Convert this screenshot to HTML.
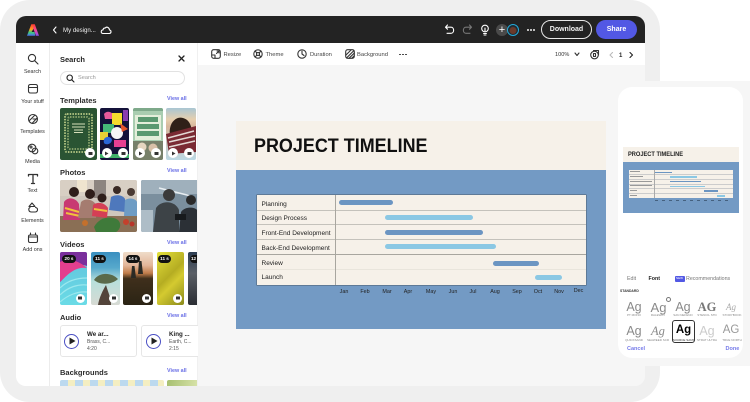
<!DOCTYPE html>
<html><head><meta charset="utf-8"><style>
html,body{margin:0;padding:0;background:#fff}
body{width:750px;height:402px;overflow:hidden;position:relative;font-family:"Liberation Sans",sans-serif;color:#2c2c2c}
.a{position:absolute}
.t{position:absolute;white-space:nowrap;line-height:1}
.h{position:absolute;font-weight:bold;font-size:7.5px;color:#2c2c2c;left:60px;white-space:nowrap;line-height:1;margin-top:1px}
.v{position:absolute;left:167px;font-size:5.4px;color:#6a6fe6;font-weight:bold;white-space:nowrap;line-height:1;margin-top:1px}
.rail{position:absolute;left:16px;width:33px;text-align:center;font-size:5.4px;color:#333;line-height:1;margin-top:1.5px}
.ic{position:absolute;fill:none;stroke:#333;stroke-width:1.1;stroke-linecap:round;stroke-linejoin:round}
.pl{position:absolute;width:10px;height:10px;border-radius:50%;background:#fff}
.pl svg{position:absolute;left:2.5px;top:2.5px}
.dur{position:absolute;height:8px;border-radius:4px;background:#111;color:#fff;font-size:4.6px;line-height:8px;text-align:center;font-weight:bold}
.img{position:absolute;overflow:hidden;border-radius:2px}
.row{position:absolute;left:0;width:329px;height:1px;background:#c4c2bb}
.lb{position:absolute;left:4.5px;font-size:6.5px;color:#222;line-height:1;white-space:nowrap;margin-top:1.5px}
.bar{position:absolute;height:5px;border-radius:3px}
.m{position:absolute;top:289.5px;width:20px;text-align:center;font-size:5.4px;color:#222;line-height:1}
.ag{position:absolute;width:24px;text-align:center;font-size:12.5px;color:#8a8a8a;line-height:1}
.al{position:absolute;width:26px;text-align:center;font-size:3px;color:#888;line-height:1;white-space:nowrap}
.tb{position:absolute;top:52.5px;font-size:5.8px;color:#444;white-space:nowrap;line-height:1}
</style></head><body>

<div class="a" style="left:0;top:0;width:660px;height:402px;background:#efefef;border-radius:30px"></div>
<div class="a" style="left:16px;top:16px;width:629px;height:370px;background:#f6f6f6;border-radius:10px;overflow:hidden">
  <div class="a" style="left:0;top:0;width:629px;height:27px;background:#232323"></div>
  <div class="a" style="left:0;top:27px;width:629px;height:22px;background:#fff"></div>
  <div class="a" style="left:0;top:27px;width:181px;height:343px;background:#fff"></div>
  <div class="a" style="left:33px;top:27px;width:1px;height:343px;background:#ececec"></div>
  <div class="a" style="left:181px;top:27px;width:1px;height:343px;background:#f0f0f0"></div>
</div>

<!-- top bar -->
<svg class="a" style="left:27px;top:24px" width="12" height="12" viewBox="0 0 12 12"><defs><linearGradient id="l1" x1="0" y1="0" x2="0" y2="1"><stop offset="0" stop-color="#ff3b30"/><stop offset=".45" stop-color="#ffa21e"/><stop offset=".7" stop-color="#3fcf7a"/><stop offset="1" stop-color="#4a6cf0"/></linearGradient><linearGradient id="l2" x1="0" y1="0" x2="0" y2="1"><stop offset="0" stop-color="#ff3b30"/><stop offset=".5" stop-color="#f0489a"/><stop offset="1" stop-color="#8a50f0"/></linearGradient></defs><path d="M4.3 .3H6.5V4.5L4.6 8H7.5L8.3 11.7H0Z" fill="url(#l1)"/><path d="M6.3 .3H7.8L12 11.7H9L6.3 4.5Z" fill="url(#l2)"/></svg>
<svg class="ic" style="left:52px;top:26px;stroke:#fff" width="6" height="8" viewBox="0 0 6 8"><path d="M4 1L1.5 4 4 7"/></svg>
<div class="t" style="left:63px;top:27.5px;font-size:6.1px;color:#f0f0f0">My design...</div>
<svg class="ic" style="left:100px;top:25px;stroke:#fff" width="12" height="10" viewBox="0 0 12 10"><path d="M3 8.5H9.2C11.5 8.5 11.6 5.2 9.5 5 9.3 2.6 6.6 1 5 3.2 3.8 2.8 3 3.8 3.2 4.8 .6 5 .6 8.5 3 8.5Z"/></svg>

<svg class="ic" style="left:444px;top:24px;stroke:#fff" width="11" height="11" viewBox="0 0 11 11"><path d="M3.5 1L1.5 3.2 3.5 5.2M1.5 3.2H7C10.5 3.2 10.5 9.3 7 9.3H3"/></svg>
<svg class="ic" style="left:462px;top:24px;stroke:#777" width="11" height="11" viewBox="0 0 11 11"><path d="M7.5 1L9.5 3.2 7.5 5.2M9.5 3.2H4C.5 3.2 .5 9.3 4 9.3H8"/></svg>
<svg class="ic" style="left:480px;top:24px;stroke:#fff" width="10" height="12" viewBox="0 0 10 12"><circle cx="5" cy="4.5" r="3.3"/><path d="M3.6 9.5H6.4M4 11H6M5 4V7"/></svg>
<div class="a" style="left:496px;top:24px;width:12px;height:12px;border-radius:50%;background:#4a4a4a"></div>
<div class="t" style="left:498px;top:24.5px;font-size:11px;color:#fff;width:8px;text-align:center">+</div>
<div class="a" style="left:507px;top:24px;width:12px;height:12px;border-radius:50%;background:radial-gradient(circle at 50% 55%,#6b3a2a 0 3px,#1c2a33 4px);border:1px solid #25a9d8;box-sizing:border-box"></div>
<div class="a" style="left:527px;top:28.5px;width:2px;height:2px;border-radius:50%;background:#eee;box-shadow:3px 0 #eee,6px 0 #eee"></div>
<div class="a" style="left:541px;top:20px;width:49px;height:17px;border:1px solid #e8e8e8;border-radius:10px;color:#f2f2f2;font-size:7px;font-weight:bold;text-align:center;line-height:17px">Download</div>
<div class="a" style="left:596px;top:20px;width:41px;height:19px;background:#5258e4;border-radius:10px;color:#fff;font-size:7px;font-weight:bold;text-align:center;line-height:19px">Share</div>

<!-- rail -->
<svg class="ic" style="left:27px;top:53px" width="12" height="12" viewBox="0 0 12 12"><circle cx="5" cy="5" r="3.6"/><path d="M7.7 7.7L11 11"/></svg>
<div class="rail" style="top:68px">Search</div>
<svg class="ic" style="left:27px;top:83px" width="12" height="12" viewBox="0 0 12 12"><path d="M1.5 3.5C1.5 2 2 1.5 3.5 1.5H8.5C10 1.5 10.5 2 10.5 3.5V8C10.5 9.5 10 10 8.5 10H3.5C2 10 1.5 9.5 1.5 8ZM1.5 4.5H10.5"/></svg>
<div class="rail" style="top:98.5px">Your stuff</div>
<svg class="ic" style="left:27px;top:113px" width="12" height="12" viewBox="0 0 12 12"><circle cx="6" cy="6" r="4.5"/><path d="M2 8L8 2M5 10.5L10 5M6 6H10.5"/></svg>
<div class="rail" style="top:128.5px">Templates</div>
<svg class="ic" style="left:27px;top:143px" width="12" height="12" viewBox="0 0 12 12"><circle cx="5" cy="5" r="3.8"/><circle cx="8" cy="8" r="2.8"/><circle cx="4" cy="4" r="1"/></svg>
<div class="rail" style="top:158px">Media</div>
<svg class="ic" style="left:27px;top:173px;stroke-width:1.3" width="12" height="12" viewBox="0 0 12 12"><path d="M1.5 3V1.5H10.5V3M6 1.5V10.5M4.5 10.5H7.5"/></svg>
<div class="rail" style="top:187.5px">Text</div>
<svg class="ic" style="left:27px;top:202px" width="12" height="12" viewBox="0 0 12 12"><path d="M5 1L8 4.5H2ZM3 5.5C1 6.5 1.5 10 4.5 10H8C11 10 11.5 6 8.5 5.5"/></svg>
<div class="rail" style="top:217px">Elements</div>
<svg class="ic" style="left:27px;top:232px" width="12" height="12" viewBox="0 0 12 12"><rect x="1.5" y="3" width="9" height="7.5" rx="1.5"/><path d="M3.5 1V3M8.5 1V3M1.5 5H10.5"/></svg>
<div class="rail" style="top:246.5px">Add ons</div>

<!-- panel -->
<div class="t" style="left:60px;top:56px;font-size:7.5px;font-weight:bold;color:#222">Search</div>
<svg class="ic" style="left:178px;top:55px;stroke:#222;stroke-width:1.3" width="7" height="7" viewBox="0 0 7 7"><path d="M1 1L6 6M6 1L1 6"/></svg>
<div class="a" style="left:60px;top:71px;width:123px;height:12px;border:1px solid #e2e2e2;border-radius:8px;background:#fff"></div>
<svg class="ic" style="left:66px;top:73.5px;stroke:#222" width="9" height="9" viewBox="0 0 9 9"><circle cx="3.7" cy="3.7" r="2.7"/><path d="M5.8 5.8L8 8"/></svg>
<div class="t" style="left:78px;top:76px;font-size:5.6px;color:#999">Search</div>

<div class="h" style="top:96.2px">Templates</div><div class="v" style="top:96px">View all</div>
<div class="h" style="top:168.2px">Photos</div><div class="v" style="top:168.2px">View all</div>
<div class="h" style="top:240.2px">Videos</div><div class="v" style="top:240.2px">View all</div>
<div class="h" style="top:313px">Audio</div><div class="v" style="top:312.5px">View all</div>
<div class="h" style="top:368.2px">Backgrounds</div><div class="v" style="top:368px">View all</div>

<!-- templates -->
<div class="img" style="left:60px;top:108px;width:37px;height:52px;background:#2a5433">
<svg width="37" height="52"><g fill="none" stroke="#a9bd7d" stroke-width="2" stroke-dasharray="1.5 1.2"><rect x="5" y="6" width="27" height="38" rx="2"/><rect x="8" y="9" width="21" height="32" rx="2" opacity=".7"/></g><rect x="11" y="14" width="15" height="12" fill="#2a5433"/><path d="M12 16H25M12 19H25M14 22H23M14 24.5H23" stroke="#d7dfba" stroke-width="1"/></svg></div>
<div class="img" style="left:100px;top:108px;width:29px;height:52px;background:#14123a">
<svg width="29" height="52"><path d="M4 6C6 3 10 3 13 6L12 11 5 11Z" fill="#e85a9b"/><rect x="12" y="5" width="10" height="12" fill="#f5dc2e"/><rect x="23" y="2" width="5" height="11" fill="#8a3bb0"/><rect x="3" y="16" width="11" height="9" fill="#45b878"/><rect x="0" y="24" width="8" height="8" fill="#e6cf35"/><circle cx="17" cy="25" r="6" fill="#f6f6f6"/><path d="M20 15l8 6-6 3z" fill="#e4532c"/><path d="M4 35C2 28 11 27 12 32 11 37 5 37 4 35Z" fill="#2a66d8"/><rect x="14" y="32" width="12" height="7" fill="#e63f92"/><rect x="0" y="46" width="29" height="4" fill="#3fb06a"/></svg></div>
<div class="img" style="left:133px;top:108px;width:30px;height:52px;background:#a9cdb0">
<svg width="30" height="52"><rect width="30" height="3" fill="#7ea98a"/><rect x="2" y="7" width="26" height="25" fill="#e4eeda"/><rect x="5" y="9" width="20" height="5" fill="#5a9970"/><rect x="4" y="16" width="22" height="5" fill="#5a9970"/><rect x="4" y="23" width="22" height="5" fill="#5a9970"/><rect y="33" width="30" height="19" fill="#77806a"/><circle cx="9" cy="39" r="4.5" fill="#e5d5c0"/><circle cx="20" cy="40" r="4.5" fill="#d8c0a8"/></svg></div>
<div class="img" style="left:166px;top:108px;width:30px;height:52px;background:linear-gradient(#a9c6d3 0,#e6cfae 22%,#d7b79c 35%,#bcd8e4 100%)">
<svg width="30" height="52"><path d="M4 28C2 15 10 8 17 10 25 12 27 22 25 30Z" fill="#2f2018"/><path d="M0 26L30 18V44L3 46Z" fill="#7a2a33"/><path d="M2 30L28 23M3 34L29 28M3 39L29 33" stroke="#e3d8d4" stroke-width="1.5"/></svg></div>
<div class="pl" style="left:85px;top:148px"><svg width="5" height="5"><rect x=".5" y="1" width="4" height="3" fill="#333"/></svg></div>
<div class="pl" style="left:101.5px;top:148px"><svg width="5" height="5"><path d="M1 .5L4.5 2.5 1 4.5Z" fill="#333"/></svg></div>
<div class="pl" style="left:118px;top:148px"><svg width="5" height="5"><rect x=".5" y="1" width="4" height="3" fill="#333"/></svg></div>
<div class="pl" style="left:135px;top:148px"><svg width="5" height="5"><path d="M1 .5L4.5 2.5 1 4.5Z" fill="#333"/></svg></div>
<div class="pl" style="left:151px;top:148px"><svg width="5" height="5"><rect x=".5" y="1" width="4" height="3" fill="#333"/></svg></div>
<div class="pl" style="left:168px;top:148px"><svg width="5" height="5"><path d="M1 .5L4.5 2.5 1 4.5Z" fill="#333"/></svg></div>
<div class="pl" style="left:184px;top:148px"><svg width="5" height="5"><rect x=".5" y="1" width="4" height="3" fill="#333"/></svg></div>

<!-- photos -->
<div class="img" style="left:60px;top:180px;width:77px;height:52px;background:#cfc7bd">
<svg width="77" height="52"><rect width="77" height="16" fill="#d8cfc4"/><rect x="17" y="0" width="10" height="12" fill="#efe4cf"/><rect x="34" y="0" width="12" height="18" fill="#8d8580"/><rect x="0" y="36" width="77" height="16" fill="#8a6f55"/>
<circle cx="14" cy="12" r="5" fill="#2e1e1a"/><path d="M3 40L4 22C8 16 16 18 19 24L20 40Z" fill="#c83a72"/><path d="M5 28L19 32M6 33L20 36" stroke="#f0c13c" stroke-width="2"/>
<circle cx="30" cy="14" r="5" fill="#2e1e1a"/><path d="M18 38L21 22C26 17 34 20 37 26L36 38Z" fill="#a57c70"/>
<circle cx="42" cy="18" r="4.5" fill="#2e1e1a"/><path d="M32 36L33 25C38 21 45 23 48 28L47 38Z" fill="#d43f55"/><path d="M34 29L47 31" stroke="#f0c13c" stroke-width="2"/>
<circle cx="57" cy="10" r="4" fill="#3a2a24"/><path d="M49 30L51 17C56 14 63 15 65 19L65 32Z" fill="#4e78bc"/>
<circle cx="71" cy="12" r="4" fill="#4a3a33"/><path d="M64 36L65 20C70 17 76 19 77 22V36Z" fill="#6e9cc4"/>
<path d="M34 47C40 36 52 36 58 40 62 44 60 50 56 52H36Z" fill="#3f7a3a"/><circle cx="66" cy="42" r="3" fill="#c4402c"/><circle cx="25" cy="43" r="3" fill="#c4702c"/><circle cx="72" cy="44" r="2.5" fill="#b8352a"/></svg></div>
<div class="img" style="left:141px;top:180px;width:56px;height:52px;background:#7b8f9e;border-radius:2px 0 0 2px">
<svg width="56" height="52"><rect width="56" height="14" fill="#9fb0bc"/><path d="M18 8L50 16" stroke="#e8eef2" stroke-width="1.5"/><rect x="0" y="30" width="12" height="22" fill="#aebdc7"/><circle cx="28" cy="15" r="6" fill="#3a3a3a"/><path d="M12 52L15 28C20 20 34 20 38 30L38 52Z" fill="#3d4347"/><circle cx="50" cy="20" r="5" fill="#2a2a2a"/><path d="M38 52L40 32C44 26 54 27 56 30V52Z" fill="#2b3036"/><rect x="34" y="34" width="11" height="6" fill="#171a1d"/></svg></div>

<!-- videos -->
<div class="img" style="left:60px;top:252px;width:27px;height:53px;background:linear-gradient(#62c3dc,#6adbe6)">
<svg width="27" height="53"><path d="M0 0H27V14C18 10 10 20 0 30Z" fill="#7a2f9c"/><path d="M0 10C8 6 18 8 27 16 16 14 8 22 0 30Z" fill="#e33f8e"/><path d="M0 36C8 28 18 26 27 26M0 43C8 35 18 32 27 33M0 50C8 43 18 39 27 40" stroke="#9be8ee" stroke-width="1.2" fill="none"/></svg></div>
<div class="img" style="left:91px;top:252px;width:29px;height:53px;background:linear-gradient(#3a8fc0 0,#57a9cc 30%,#b8e0dc 55%,#d7dad3 100%)"><svg width="29" height="53"><path d="M3 28C8 20 20 20 27 27 22 32 10 34 3 28Z" fill="#5a6a4a"/><path d="M7 53C8 46 12 38 15 33 17 40 20 46 20 53Z" fill="#53443a"/></svg></div>
<div class="img" style="left:123px;top:252px;width:30px;height:53px;background:linear-gradient(#efdcc9 0,#e3b69a 25%,#c07c4a 40%,#3f2f1c 50%,#2b2414 100%)"><svg width="30" height="53"><path d="M9 14l2.5 0 1.5 12h-5zM16 9l2.5 0 1.5 13h-5z" fill="#2b2a25"/></svg></div>
<div class="img" style="left:157px;top:252px;width:27px;height:53px;background:linear-gradient(135deg,#e3df3c 0,#b5ad22 45%,#d4ca30 60%,#8a8a1b 100%)"></div>
<div class="img" style="left:188px;top:252px;width:9px;height:53px;background:linear-gradient(#2c3d52,#5a5f66 40%,#2a2d33);border-radius:2px 0 0 2px"></div>
<div class="dur" style="left:62px;top:254.5px;width:14px">20 s</div>
<div class="dur" style="left:93px;top:254.5px;width:13px">11 s</div>
<div class="dur" style="left:126px;top:254.5px;width:14px">14 s</div>
<div class="dur" style="left:158px;top:254.5px;width:13px">11 s</div>
<div class="dur" style="left:190px;top:254.5px;width:7px;border-radius:4px 0 0 4px">12</div>
<div class="pl" style="left:75.5px;top:293.5px;width:9px;height:9px"><svg width="4" height="4"><rect y=".5" width="4" height="3" fill="#333"/></svg></div>
<div class="pl" style="left:109px;top:293.5px;width:9px;height:9px"><svg width="4" height="4"><rect y=".5" width="4" height="3" fill="#333"/></svg></div>
<div class="pl" style="left:142px;top:293.5px;width:9px;height:9px"><svg width="4" height="4"><rect y=".5" width="4" height="3" fill="#333"/></svg></div>
<div class="pl" style="left:173px;top:293.5px;width:9px;height:9px"><svg width="4" height="4"><rect y=".5" width="4" height="3" fill="#333"/></svg></div>

<!-- audio -->
<div class="a" style="left:60px;top:325px;width:75px;height:30px;border:1px solid #e6e6e6;border-radius:3px;background:#fff"></div>
<div class="a" style="left:141px;top:325px;width:56px;height:30px;border:1px solid #e6e6e6;border-right:none;border-radius:3px 0 0 3px;background:#fff"></div>
<div class="a" style="left:64px;top:333.5px;width:15px;height:15px;box-sizing:border-box;border:1.5px solid #4a4fc4;border-radius:50%"></div>
<svg class="a" style="left:68.5px;top:337px" width="7" height="8"><path d="M.5 .5L6.5 4 .5 7.5Z" fill="#222"/></svg>
<div class="a" style="left:146px;top:333.5px;width:15px;height:15px;box-sizing:border-box;border:1.5px solid #4a4fc4;border-radius:50%"></div>
<svg class="a" style="left:150.5px;top:337px" width="7" height="8"><path d="M.5 .5L6.5 4 .5 7.5Z" fill="#222"/></svg>
<div class="t" style="left:87px;top:332px;font-size:6.2px;font-weight:bold;color:#222">We ar...</div>
<div class="t" style="left:87px;top:340px;font-size:5px;color:#555">Brass, C...</div>
<div class="t" style="left:87px;top:347px;font-size:5px;color:#555">4:20</div>
<div class="t" style="left:169px;top:332px;font-size:6.2px;font-weight:bold;color:#222">King ...</div>
<div class="t" style="left:169px;top:340px;font-size:5px;color:#555">Earth, C...</div>
<div class="t" style="left:169px;top:347px;font-size:5px;color:#555">2:15</div>

<!-- backgrounds -->
<div class="a" style="left:60px;top:380px;width:104px;height:6px;background:repeating-linear-gradient(90deg,#bcd9ef 0 8px,#f4eec2 8px 15px);border-radius:2px 2px 0 0"></div>
<div class="a" style="left:167px;top:380px;width:30px;height:6px;background:linear-gradient(100deg,#a6bf70,#d7e2a8);border-radius:2px 0 0 0"></div>

<!-- toolbar -->
<svg class="ic" style="left:211px;top:49px" width="10" height="10" viewBox="0 0 10 10"><rect x=".7" y=".7" width="8.6" height="8.6" rx="2"/><path d="M1 6H4V9M5.5 4.5L8 2M6 2H8V4"/></svg>
<div class="tb" style="left:223.5px">Resize</div>
<svg class="ic" style="left:253px;top:49px" width="10" height="10" viewBox="0 0 10 10"><circle cx="5" cy="5" r="4.2"/><circle cx="5" cy="5" r="1.5"/><path d="M2 2L3.8 3.8M8 2L6.2 3.8M2 8L3.8 6.2M8 8L6.2 6.2"/></svg>
<div class="tb" style="left:265.5px">Theme</div>
<svg class="ic" style="left:297px;top:49px" width="10" height="10" viewBox="0 0 10 10"><circle cx="5" cy="5" r="4.2"/><path d="M5 2.2V5L7 6.5"/></svg>
<div class="tb" style="left:310px">Duration</div>
<svg class="ic" style="left:345px;top:49px" width="10" height="10" viewBox="0 0 10 10"><rect x=".7" y=".7" width="8.6" height="8.6" rx="2"/><path d="M1 6L6 1M1.5 9L9 1.5M4 9.3L9.3 4M7 9L9 7"/></svg>
<div class="tb" style="left:357px">Background</div>
<div class="a" style="left:399px;top:53.5px;width:1.6px;height:1.6px;border-radius:50%;background:#333;box-shadow:3px 0 #333,6px 0 #333"></div>
<div class="t" style="left:555px;top:52.5px;font-size:5.6px;color:#333">100%</div>
<svg class="ic" style="left:574px;top:52px" width="6" height="5" viewBox="0 0 6 5"><path d="M1 1L3 3.5 5 1"/></svg>
<svg class="ic" style="left:590px;top:49px" width="10" height="11" viewBox="0 0 10 11"><circle cx="4.5" cy="6" r="3.8"/><path d="M3.5 1.5H8.5V6"/><rect x="3.5" y="4.5" width="2" height="3"/></svg>
<svg class="ic" style="left:609px;top:52px;stroke:#bbb" width="5" height="6" viewBox="0 0 5 6"><path d="M3.5 .5L1 3 3.5 5.5"/></svg>
<div class="t" style="left:619px;top:52.5px;font-size:6px;color:#222;font-weight:bold">1</div>
<svg class="ic" style="left:629px;top:52px;stroke:#222" width="5" height="6" viewBox="0 0 5 6"><path d="M1 .5L3.5 3 1 5.5"/></svg>

<!-- main doc -->
<div class="a" style="left:236px;top:121px;width:370px;height:49px;background:#f6f1e9"></div>
<div class="a" style="left:236px;top:170px;width:370px;height:159px;background:#739ac4"></div>
<div class="t" style="left:253.5px;top:137px;font-size:19.6px;font-weight:bold;color:#111;transform:scaleX(.916);transform-origin:0 0">PROJECT TIMELINE</div>
<div class="a" style="left:257px;top:195px;width:329px;height:89.5px;background:#f6f1e9;box-shadow:0 0 0 .5px #4a5a6a">
  <div class="row" style="top:14.5px"></div><div class="row" style="top:29px"></div><div class="row" style="top:44px"></div><div class="row" style="top:59px;background:#a8a69f"></div><div class="row" style="top:74px;background:#e9e5dc"></div>
  <div class="a" style="left:78px;top:0;width:1px;height:89.5px;background:#a8a69f"></div>
  <div class="lb" style="top:5px">Planning</div>
  <div class="lb" style="top:19.5px">Design Process</div>
  <div class="lb" style="top:34.5px">Front-End Development</div>
  <div class="lb" style="top:49.5px">Back-End Development</div>
  <div class="lb" style="top:64px">Review</div>
  <div class="lb" style="top:78.5px">Launch</div>
</div>
<div class="bar" style="left:339px;top:200px;width:54px;background:#6b95c2"></div>
<div class="bar" style="left:385px;top:215px;width:88px;background:#8bc8e4"></div>
<div class="bar" style="left:385px;top:229.5px;width:98px;background:#6b95c2"></div>
<div class="bar" style="left:385px;top:244px;width:111px;background:#8bc8e4"></div>
<div class="bar" style="left:493px;top:260.5px;width:46px;background:#6b95c2"></div>
<div class="bar" style="left:535px;top:274.5px;width:27px;background:#8bc8e4"></div>
<div class="m" style="left:334px">Jan</div><div class="m" style="left:355px">Feb</div><div class="m" style="left:377px">Mar</div><div class="m" style="left:398px">Apr</div><div class="m" style="left:421px">May</div><div class="m" style="left:443px">Jun</div><div class="m" style="left:463px">Jul</div><div class="m" style="left:485px">Aug</div><div class="m" style="left:507px">Sep</div><div class="m" style="left:528px">Oct</div><div class="m" style="left:549px">Nov</div><div class="m" style="left:568.5px;top:289px">Dec</div>

<!-- phone -->
<div class="a" style="left:610px;top:81px;width:160px;height:285px;background:#f6f6f6;border-radius:18px"></div>
<div class="a" style="left:618px;top:87px;width:124.5px;height:271px;background:#fff;border-radius:14px"></div>
<div class="a" style="left:623px;top:147px;width:116px;height:15px;background:#f6f1e9"></div>
<div class="a" style="left:623px;top:162px;width:116px;height:50.5px;background:#739ac4"></div>
<div class="t" style="left:628px;top:152px;font-size:6.2px;font-weight:bold;color:#222;transform:scaleX(.92);transform-origin:0 0">PROJECT TIMELINE</div>
<div class="a" style="left:629px;top:169.5px;width:104px;height:28px;background:#f6f1e9">
  <div class="a" style="left:0;top:4.5px;width:104px;height:.5px;background:#ccc"></div>
  <div class="a" style="left:0;top:9.5px;width:104px;height:.5px;background:#ccc"></div>
  <div class="a" style="left:0;top:14px;width:104px;height:.5px;background:#ccc"></div>
  <div class="a" style="left:0;top:18.5px;width:104px;height:.5px;background:#ccc"></div>
  <div class="a" style="left:0;top:23.5px;width:104px;height:.5px;background:#ccc"></div>
  <div class="a" style="left:24.5px;top:0;width:.5px;height:28px;background:#aaa"></div>
  <div class="a" style="left:1px;top:1.5px;width:10px;height:1.2px;background:#999"></div>
  <div class="a" style="left:1px;top:6px;width:13px;height:1.2px;background:#999"></div>
  <div class="a" style="left:1px;top:11px;width:22px;height:1.2px;background:#999"></div>
  <div class="a" style="left:1px;top:15.5px;width:22px;height:1.2px;background:#999"></div>
  <div class="a" style="left:1px;top:20.5px;width:7px;height:1.2px;background:#999"></div>
  <div class="a" style="left:1px;top:25px;width:7px;height:1.2px;background:#999"></div>
  <div class="a" style="left:26px;top:2px;width:17px;height:1.5px;background:#6b95c2"></div>
  <div class="a" style="left:41px;top:6.5px;width:27px;height:1.5px;background:#8bc8e4"></div>
  <div class="a" style="left:41px;top:11px;width:31px;height:1.5px;background:#6b95c2"></div>
  <div class="a" style="left:41px;top:16px;width:35px;height:1.5px;background:#8bc8e4"></div>
  <div class="a" style="left:75px;top:20.5px;width:14px;height:1.5px;background:#6b95c2"></div>
  <div class="a" style="left:88px;top:25.5px;width:8px;height:1.5px;background:#8bc8e4"></div>
</div>
<div class="a" style="left:655px;top:199.5px;width:76px;height:1px;background:repeating-linear-gradient(90deg,#45617f 0 3px,transparent 3px 7px)"></div>

<div class="t" style="left:627px;top:277px;font-size:5.3px;color:#777">Edit</div>
<div class="t" style="left:648.5px;top:277px;font-size:5.3px;font-weight:bold;color:#222">Font</div>
<div class="a" style="left:674.5px;top:276px;width:10px;height:5.5px;background:#5258e4;border-radius:1px;color:#fff;font-size:3px;line-height:5.5px;text-align:center">NEW</div>
<div class="t" style="left:686px;top:277px;font-size:5.3px;color:#777">Recommendations</div>
<div class="t" style="left:620px;top:289.5px;font-size:3.4px;font-weight:bold;color:#333">STANDARD</div>

<div class="ag" style="left:622px;top:301px">Ag</div>
<div class="ag" style="left:646.5px;top:301px;font-size:13px">Ag</div>
<div class="a" style="left:665.5px;top:297px;width:3px;height:3px;border:.7px solid #777;border-radius:50%"></div>
<div class="ag" style="left:671px;top:301px">Ag</div>
<div class="ag" style="left:695px;top:300.5px;font-family:'Liberation Serif',serif;font-weight:bold;color:#777">AG</div>
<div class="ag" style="left:719px;top:303px;font-size:9px;font-style:italic;font-family:'Liberation Serif',serif;color:#aaa">Ag</div>
<div class="al" style="left:621px;top:314px">PT MONO</div>
<div class="al" style="left:645px;top:314px">RALEWAY</div>
<div class="al" style="left:670px;top:314px">SAN NEFENO</div>
<div class="al" style="left:694px;top:314px">STENCIL STD</div>
<div class="al" style="left:719px;top:314px">STORYBOOK</div>

<div class="ag" style="left:622px;top:325px">Ag</div>
<div class="ag" style="left:646px;top:325px;font-family:'Liberation Serif',serif;font-style:italic">Ag</div>
<div class="a" style="left:672px;top:320px;width:23px;height:23px;box-sizing:border-box;border:1.3px solid #333;border-radius:3px;background:#fff"></div>
<div class="ag" style="left:671.5px;top:325px;color:#000;font-weight:bold;font-size:11.5px">Ag</div>
<div class="ag" style="left:695px;top:325px;color:#ccc">Ag</div>
<div class="ag" style="left:719px;top:325px;color:#999;font-size:11.5px">AG</div>
<div class="al" style="left:621px;top:338.5px">QUICKSAND</div>
<div class="al" style="left:645px;top:338.5px">SEAWEED SCR</div>
<div class="al" style="left:670.5px;top:338.5px;color:#333">SOURCE SANS</div>
<div class="al" style="left:694px;top:338.5px">STRAT ULTRA</div>
<div class="al" style="left:719px;top:338.5px">TRUE NORTH</div>
<div class="t" style="left:627px;top:347px;font-size:5.5px;font-weight:bold;color:#5258e4;opacity:.8">Cancel</div>
<div class="t" style="left:725.5px;top:347px;font-size:5.5px;font-weight:bold;color:#5258e4;opacity:.8">Done</div>
</body></html>
